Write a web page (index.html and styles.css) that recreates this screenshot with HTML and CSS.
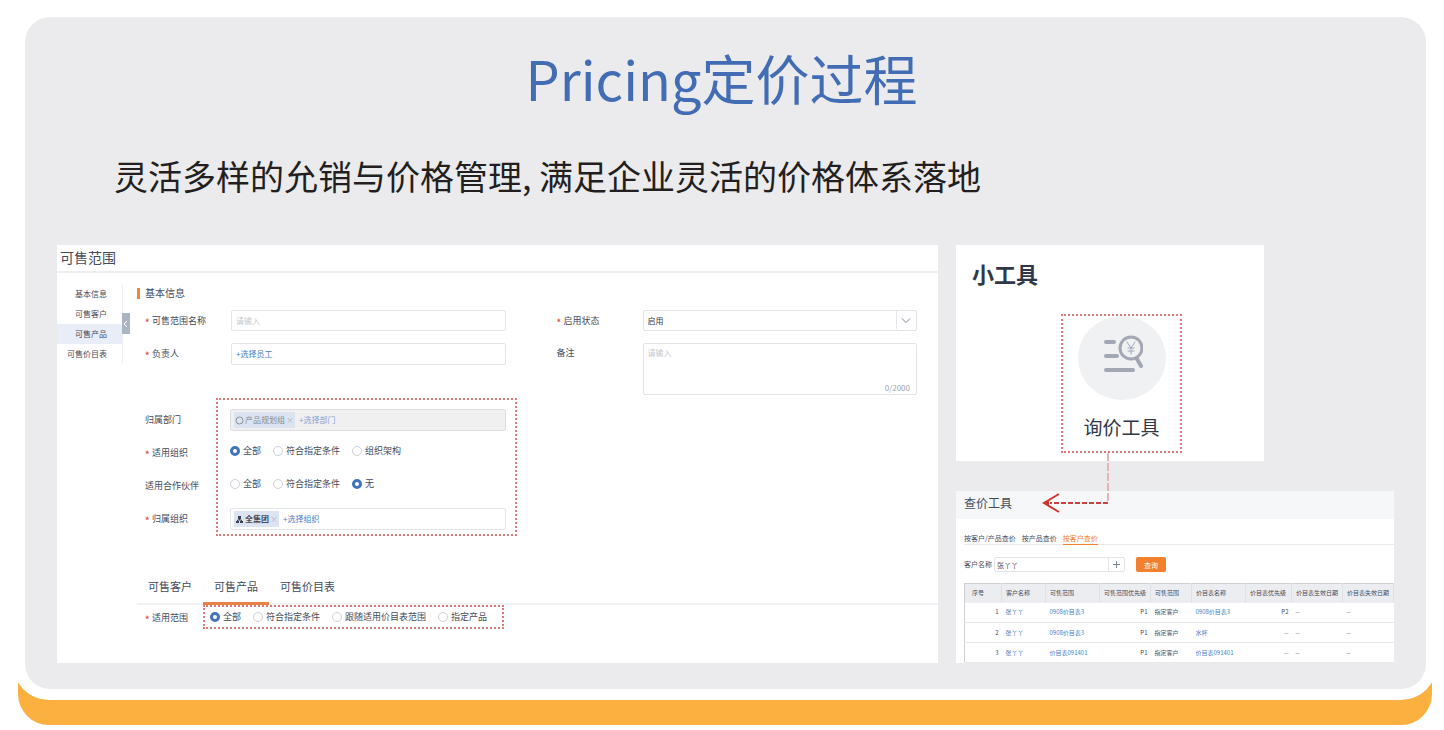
FILE: index.html
```html
<!DOCTYPE html>
<html lang="zh-CN">

<head>
    <meta charset="UTF-8">
    <meta name="viewport" content="width=device-width, initial-scale=1.0">
    <title>Pricing定价过程</title>
    <link rel="stylesheet" href="styles.css">
</head>

<body>
    <div class="card">
        <main class="slide">
            <h1>Pricing定价过程</h1>
            <p class="subtitle">灵活多样的允销与价格管理, 满足企业灵活的价格体系落地</p>

            <div class="panels">
                <!-- 可售范围 -->
                <section class="panel scope">
                    <h2>可售范围</h2>
                    <div class="scope-body">
                        <nav class="side">
                            <a href="#">基本信息</a>
                            <a href="#">可售客户</a>
                            <a href="#" class="active">可售产品</a>
                            <a href="#">可售价目表</a>
                            <button type="button" class="fold" aria-label="收起">
                                <svg width="8" height="10" viewBox="0 0 8 10"><path d="M5 2 L2 5 L5 8" fill="none" stroke="#fff"/></svg>
                            </button>
                        </nav>

                        <form class="form">
                            <h3>基本信息</h3>
                            <div class="cols">
                                <div class="col">
                                    <div class="field">
                                        <label for="name" class="req">可售范围名称</label>
                                        <input type="text" id="name" class="box" placeholder="请输入">
                                    </div>
                                    <div class="field">
                                        <span class="req">负责人</span>
                                        <div class="box tall"><button type="button" class="add">+选择员工</button></div>
                                    </div>
                                </div>
                                <div class="col">
                                    <div class="field">
                                        <label for="status" class="req">启用状态</label>
                                        <div class="select">
                                            <select id="status" class="box">
                                                <option>启用</option>
                                                <option>停用</option>
                                            </select>
                                            <svg width="20" height="20" viewBox="0 0 20 20"><path d="M0.500 1V19" stroke="#e3e6ea"/><path d="M6 8.500l4 4 4-4" fill="none" stroke="#7d8594"/></svg>
                                        </div>
                                    </div>
                                    <div class="field top">
                                        <label for="remark">备注</label>
                                        <div class="remark">
                                            <textarea id="remark" class="box" placeholder="请输入"></textarea>
                                            <span class="count">0/2000</span>
                                        </div>
                                    </div>
                                </div>
                            </div>

                            <div class="cols">
                                <div class="group">
                                    <div class="names">
                                        <span>归属部门</span>
                                        <span class="req">适用组织</span>
                                        <span>适用合作伙伴</span>
                                        <span class="req">归属组织</span>
                                    </div>
                                    <div class="mark controls">
                                        <div class="box disabled">
                                            <span class="tag"><svg width="9" height="9" viewBox="0 0 9 9"><circle cx="4.500" cy="4.500" r="3.500" fill="none" stroke="#8c929e"/></svg>产品规划组<button type="button" class="close" aria-label="移除">×</button></span>
                                            <button type="button" class="add">+选择部门</button>
                                        </div>
                                        <div class="radios">
                                            <label><input type="radio" name="org" checked>全部</label>
                                            <label><input type="radio" name="org">符合指定条件</label>
                                            <label><input type="radio" name="org">组织架构</label>
                                        </div>
                                        <div class="radios">
                                            <label><input type="radio" name="partner">全部</label>
                                            <label><input type="radio" name="partner">符合指定条件</label>
                                            <label><input type="radio" name="partner" checked>无</label>
                                        </div>
                                        <div class="box">
                                            <span class="tag dark"><svg width="9" height="9" viewBox="0 0 9 9"><path d="M3 1h3v3H3zM1 6h3v2H1zM5 6h3v2H5z" fill="#3a4254"/><path d="M4.500 4v1M2.500 6V5h4v1" fill="none" stroke="#3a4254"/></svg>全集团<button type="button" class="close" aria-label="移除">×</button></span>
                                            <button type="button" class="add">+选择组织</button>
                                        </div>
                                    </div>
                                </div>
                            </div>

                            <div class="tabs">
                                <a href="#">可售客户</a>
                                <a href="#" class="active">可售产品</a>
                                <a href="#">可售价目表</a>
                            </div>
                            <div class="range">
                                <span class="req">适用范围</span>
                                <div class="mark radios">
                                    <label><input type="radio" name="range" checked>全部</label>
                                    <label><input type="radio" name="range">符合指定条件</label>
                                    <label><input type="radio" name="range">跟随适用价目表范围</label>
                                    <label><input type="radio" name="range">指定产品</label>
                                </div>
                            </div>
                        </form>
                    </div>
                </section>

                <div class="right">
                    <!-- 小工具 -->
                    <section class="panel tools">
                        <h2>小工具</h2>
                        <a href="#" class="mark tool">
                            <span class="circle">
                                <svg width="42" height="42" viewBox="0 0 42 42" fill="none" stroke="#a3a7b4" stroke-linecap="round">
                                    <path d="M5 8h8M5 22h11M5 36h27" stroke-width="4"/>
                                    <circle cx="30" cy="14" r="11" stroke-width="3"/>
                                    <path d="M36 25l4 7" stroke-width="4"/>
                                    <path d="M26 8l4 6 4-6M30 14v6M27 14h6M27 17h6" stroke-width="1"/>
                                </svg>
                            </span>
                            询价工具
                        </a>
                    </section>

                    <!-- 查价工具 -->
                    <section class="panel query">
                        <h2>查价工具</h2>
                        <div class="query-body">
                            <div class="query-tabs">
                                <a href="#">按客户/产品查价</a>
                                <a href="#">按产品查价</a>
                                <a href="#" class="active">按客户查价</a>
                            </div>
                            <div class="search">
                                <label for="customer">客户名称</label>
                                <div class="picker">
                                    <input type="text" id="customer" value="张丫丫">
                                    <button type="button" aria-label="添加"><svg width="9" height="9" viewBox="0 0 9 9"><path d="M4.500 1v7M1 4.500h7" stroke="#7d8594"/></svg></button>
                                </div>
                                <button type="button" class="go">查询</button>
                            </div>
                            <table>
                                <colgroup>
                                    <col class="c-no"><col class="c-user"><col class="c-name"><col class="c-level"><col class="c-type"><col class="c-name"><col class="c-rank"><col class="c-date"><col class="c-date">
                                </colgroup>
                                <thead>
                                    <tr>
                                        <th>序号</th>
                                        <th>客户名称</th>
                                        <th>可售范围</th>
                                        <th>可售范围优先级</th>
                                        <th>可售范围</th>
                                        <th>价目表名称</th>
                                        <th>价目表优先级</th>
                                        <th>价目表生效日期</th>
                                        <th>价目表失效日期</th>
                                    </tr>
                                </thead>
                                <tbody>
                                    <tr>
                                        <td class="num">1</td>
                                        <td><a href="#">张丫丫</a></td>
                                        <td><a href="#">0908价目表3</a></td>
                                        <td class="num">P1</td>
                                        <td>指定客户</td>
                                        <td><a href="#">0908价目表3</a></td>
                                        <td class="num">P2</td>
                                        <td>--</td>
                                        <td>--</td>
                                    </tr>
                                    <tr>
                                        <td class="num">2</td>
                                        <td><a href="#">张丫丫</a></td>
                                        <td><a href="#">0908价目表3</a></td>
                                        <td class="num">P1</td>
                                        <td>指定客户</td>
                                        <td><a href="#">水杯</a></td>
                                        <td class="num">--</td>
                                        <td>--</td>
                                        <td>--</td>
                                    </tr>
                                    <tr>
                                        <td class="num">3</td>
                                        <td><a href="#">张丫丫</a></td>
                                        <td><a href="#">价目表091401</a></td>
                                        <td class="num">P1</td>
                                        <td>指定客户</td>
                                        <td><a href="#">价目表091401</a></td>
                                        <td class="num">--</td>
                                        <td>--</td>
                                        <td>--</td>
                                    </tr>
                                </tbody>
                            </table>
                        </div>
                    </section>

                    <!-- 询价工具 → 查价工具 -->
                    <svg class="arrow" width="68" height="62" viewBox="0 0 68 62" fill="none">
                        <path d="M66 0V50" stroke="#e9b3b3" stroke-width="2" stroke-dasharray="8 2"/>
                        <path d="M66 50H8" stroke="#c9403c" stroke-width="2" stroke-dasharray="5 2"/>
                        <path d="M17 41L2 50L17 59" stroke="#d0342f" stroke-width="2"/>
                        <path d="M1 50l6-3v6z" fill="#d0342f"/>
                    </svg>
                </div>
            </div>
        </main>
    </div>
</body>

</html>
```
FILE: styles.css
```css
* {
    box-sizing: border-box;
}

body {
    margin: 0;
    padding: 5px 7px 31px 13px;
    background-color: #fff;
    font-family: "Noto Sans CJK SC", sans-serif;
    color: #454b5c;
}

h1, h2, h3, p {
    margin: 0;
    font-weight: normal;
}

a {
    color: inherit;
    text-decoration: none;
}

button, input, select, textarea {
    font-family: inherit;
    color: inherit;
    margin: 0;
    padding: 0;
    border: none;
    background: none;
    outline: none;
}

svg {
    display: block;
    flex: none;
}

/* white card, orange band below it */
.card {
    padding: 12px 11px 11px 12px;
    border-radius: 36px;
    background-color: #fff;
    box-shadow: 0 30px 0 -5px #fbb040;
}

.slide {
    padding: 21px 32px 26px;
    border-radius: 25px;
    background-color: #ebebed;
}

h1 {
    padding-right: 8px;
    font-size: 54px;
    line-height: 80px;
    text-align: center;
    color: #426db5;
}

.subtitle {
    margin: 33px 0 44px 57px;
    font-size: 34px;
    line-height: 50px;
    color: #231f20;
}

.panels {
    display: grid;
    grid-template-columns: 881fr 438fr;
    gap: 18px;
}

.panel {
    background-color: #fff;
}

.mark {
    border: 2px dotted #e07a78;
}

/* 可售范围 */
.scope h2 {
    height: 28px;
    padding-left: 3px;
    border-bottom: 2px solid #eeeff0;
    font-size: 14px;
    line-height: 25px;
}

.scope-body {
    display: flex;
}

.side {
    position: relative;
    flex: none;
    align-self: flex-start;
    width: 66px;
    margin-top: 11px;
    border-right: 1px solid #eceef1;
    font-size: 8px;
    line-height: 20px;
    text-align: right;
}

.side a {
    display: block;
    padding-right: 15px;
}

.side .active {
    background-color: #e8edf8;
}

.fold {
    position: absolute;
    top: 29px;
    left: 65px;
    width: 8px;
    height: 21px;
    background-color: #abb4c3;
}

.form {
    flex: 1;
    padding-left: 14px;
    font-size: 9px;
}

h3 {
    display: flex;
    align-items: center;
    gap: 5px;
    margin: 10px 0 7px;
    font-size: 10px;
    line-height: 20px;
}

h3::before {
    content: "";
    width: 3px;
    height: 11px;
    background-color: #f58235;
}

.cols {
    display: grid;
    grid-template-columns: 1fr 1fr;
    column-gap: 51px;
    margin: 0 21px 3px 8px;
}

.col {
    display: flex;
    flex-direction: column;
    gap: 12px;
}

.field {
    display: grid;
    grid-template-columns: 86px 1fr;
    align-items: center;
    line-height: 20px;
}

.top {
    align-items: start;
}

.req::before {
    content: "*";
    display: inline-block;
    width: 7px;
    font-weight: bold;
    line-height: 9px;
    vertical-align: -2px;
    color: #e2504d;
}

.box {
    display: flex;
    align-items: center;
    gap: 4px;
    width: 100%;
    height: 21px;
    padding: 0 4px;
    border: 1px solid #e1e4e8;
    border-radius: 2px;
    background-color: #fff;
    font-size: 8px;
}

.tall {
    height: 22px;
}

.box::placeholder {
    color: #c3c7ce;
}

.add {
    font-size: 8px;
    line-height: 16px;
    color: #4b7dc6;
}

.select, .remark {
    position: relative;
}

.select select {
    appearance: none;
    color: #2f3748;
}

.select svg {
    position: absolute;
    top: 0;
    right: 1px;
    pointer-events: none;
}

.remark textarea {
    display: block;
    height: 52px;
    line-height: 18px;
    resize: none;
}

.count {
    position: absolute;
    right: 7px;
    bottom: 0;
    font-size: 8px;
    line-height: 14px;
    color: #9a9fa8;
}

.group {
    display: grid;
    grid-template-columns: 71px 1fr;
    margin-right: -11px;
}

.names, .controls {
    display: grid;
    grid-auto-rows: 22px;
    row-gap: 11px;
}

.names {
    padding-top: 11px;
    line-height: 22px;
}

.controls {
    padding: 9px 9px 4px 12px;
}

.controls .box {
    height: 22px;
    padding: 0 3px;
}

.controls .disabled {
    border-color: #dddddf;
    background-color: #f0f0f0;
    color: #858b97;
}

.disabled .add {
    color: #7da3da;
}

.tag {
    display: flex;
    align-items: center;
    gap: 1px;
    padding: 0 1px;
    background-color: #dbe4f0;
    line-height: 16px;
}

.dark {
    font-weight: bold;
}

.close {
    font-size: 8px;
    line-height: 16px;
    color: #b0b9c7;
}

.radios {
    display: flex;
    gap: 12px;
    line-height: 18px;
}

.radios label {
    display: flex;
    align-items: center;
    gap: 3px;
    height: 18px;
}

input[type=radio] {
    appearance: none;
    width: 10px;
    height: 10px;
    border: 1px solid #cdd1d8;
    border-radius: 50%;
    background-color: #fff;
}

input[type=radio]:checked {
    border: 3px solid #4173be;
}

.tabs {
    display: flex;
    margin-top: 34px;
    border-bottom: 2px solid #f0f2f4;
    font-size: 11px;
    line-height: 32px;
}

.tabs a {
    padding: 0 11px;
    border-bottom: 3px solid transparent;
    margin-bottom: -2px;
}

.tabs .active {
    border-color: #e98245;
}

.range {
    display: grid;
    grid-template-columns: 58px 301px;
    padding-left: 8px;
    line-height: 26px;
}

.range .radios {
    height: 24px;
    padding: 1px 5px;
}

/* 小工具 */
.right {
    position: relative;
    display: flex;
    flex-direction: column;
    gap: 30px;
}

.tools {
    width: 308px;
    height: 216px;
    padding: 12px 16px;
    color: #2f3748;
}

.tools h2 {
    font-size: 22px;
    font-weight: bold;
    line-height: 32px;
}

.tool {
    display: flex;
    flex-direction: column;
    align-items: center;
    width: 121px;
    height: 139px;
    margin: 25px 0 0 89px;
    font-size: 19px;
    line-height: 54px;
}

.circle {
    display: flex;
    justify-content: center;
    flex: none;
    width: 88px;
    height: 84px;
    padding-top: 18px;
    border-radius: 50%;
    background-color: #eff1f3;
}

.arrow {
    position: absolute;
    top: 208px;
    left: 86px;
}

/* 查价工具 */
.query h2 {
    padding-left: 8px;
    background-color: #f6f7f9;
    font-size: 12px;
    line-height: 24px;
    height: 28px;
}

.query-body {
    padding: 14px 0 0 8px;
    font-size: 7px;
}

.query-tabs {
    display: flex;
    gap: 6px;
    border-bottom: 1px solid #e9eaec;
    line-height: 10px;
}

.query-tabs a {
    padding-bottom: 1px;
    margin-bottom: -1px;
    border-bottom: 1px solid transparent;
}

.query-tabs .active {
    border-color: #f2802e;
    color: #f2802e;
}

.search {
    display: flex;
    align-items: center;
    height: 15px;
    margin: 12px 0 11px;
    line-height: 13px;
}

.picker {
    display: flex;
    width: 131px;
    height: 15px;
    margin: 0 11px 0 2px;
    border: 1px solid #e1e4e8;
    border-radius: 2px;
}

.picker input {
    flex: 1;
    min-width: 0;
    padding-left: 2px;
    font-size: 7px;
}

.picker button {
    padding: 0 3px;
    border-left: 1px solid #e1e4e8;
}

.go {
    width: 30px;
    height: 15px;
    border-radius: 2px;
    background-color: #f2802e;
    font-size: 7px;
    line-height: 14px;
    color: #fff;
}

table {
    width: 100%;
    table-layout: fixed;
    border-collapse: collapse;
    border-top: 1px solid #cfd0d3;
    border-left: 1px solid #cfd0d3;
    font-size: 6px;
    line-height: 18px;
    white-space: nowrap;
}

th, td {
    height: 19px;
    padding: 0 3px 0 4px;
    font-weight: normal;
    text-align: left;
}

th {
    border-right: 1px solid #e0e1e6;
    background-color: #ecedf1;
}

th:first-child {
    padding-left: 7px;
}

td {
    height: 20px;
    border-bottom: 1px solid #e7e8ea;
}

td a {
    color: #4b7dc6;
}

.num {
    text-align: right;
}

.c-no {
    width: 37px;
}

.c-user {
    width: 44px;
}

.c-name {
    width: 54px;
}

.c-level {
    width: 51px;
}

.c-type {
    width: 41px;
}

.c-rank {
    width: 46px;
}

.c-date {
    width: 51px;
}
```
